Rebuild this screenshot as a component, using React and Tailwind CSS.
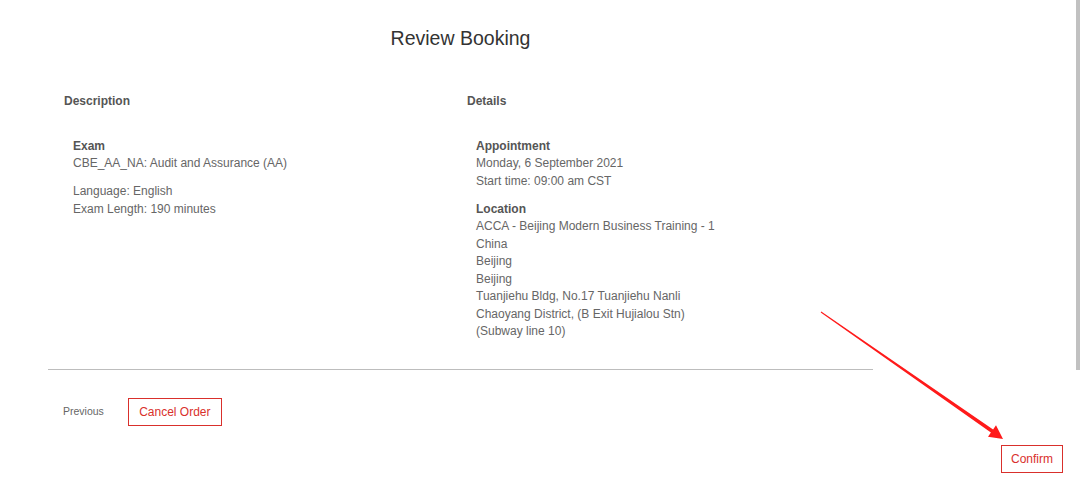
import React from "react";

const body = "text-[12px] leading-[17.5px] text-[#666]";
const label = "text-[12px] leading-[17.5px] font-bold text-[#555]";

function Arrow() {
  return (
    <svg
      className="absolute left-0 top-0 pointer-events-none"
      width="1080"
      height="480"
      viewBox="0 0 1080 480"
    >
      <polygon
        points="821.3,311.6 993.1,429.4 996,425.2 1003,439 988,436.8 990.9,432.6 820.7,312.4"
        fill="#ff1a1a"
      />
    </svg>
  );
}

export default function App() {
  return (
    <div
      className="relative w-[1080px] h-[480px] overflow-hidden bg-white"
      style={{ fontFamily: '"Liberation Sans", Arial, sans-serif' }}
    >
      <div className="ml-[48px] w-[825px] pt-[24px]">
        <h1 className="text-center text-[19.5px] leading-[28px] text-[#333]">Review Booking</h1>

        <div className="grid grid-cols-[403px_1fr] mt-[41px]">
          <div className="pl-[16px]">
            <div className={label}>Description</div>
            <div className="pl-[9px] mt-[27px]">
              <div className={label}>Exam</div>
              <div className={body}>CBE_AA_NA: Audit and Assurance (AA)</div>
              <div className={`${body} mt-[10.5px]`}>Language: English</div>
              <div className={body}>Exam Length: 190 minutes</div>
            </div>
          </div>
          <div className="pl-[16px]">
            <div className={label}>Details</div>
            <div className="pl-[9px] mt-[27px]">
              <div className={label}>Appointment</div>
              <div className={body}>Monday, 6 September 2021</div>
              <div className={body}>Start time: 09:00 am CST</div>
              <div className={`${label} mt-[10.5px]`}>Location</div>
              <div className={body}>ACCA - Beijing Modern Business Training - 1</div>
              <div className={body}>China</div>
              <div className={body}>Beijing</div>
              <div className={body}>Beijing</div>
              <div className={body}>Tuanjiehu Bldg, No.17 Tuanjiehu Nanli</div>
              <div className={body}>Chaoyang District, (B Exit Hujialou Stn)</div>
              <div className={body}>(Subway line 10)</div>
            </div>
          </div>
        </div>

        <div className="mt-[28px] h-px bg-[#bdbdbd]" />

        <div className="flex items-center mt-[28px] pl-[15px]">
          <span className="text-[10.5px] text-[#666]">Previous</span>
          <button className="ml-[24px] w-[94px] h-[28px] border border-[#d9302c] text-[12px] text-[#d9302c] bg-white">
            Cancel Order
          </button>
        </div>
      </div>

      <div className="flex justify-end pr-[17px] mt-[19px]">
        <button className="w-[62px] h-[28px] border border-[#d9302c] text-[12px] text-[#d9302c] bg-white">
          Confirm
        </button>
      </div>

      <div className="absolute right-0 top-0 w-[4px] h-[370px] bg-[#c1c1c1]" />
      <Arrow />
    </div>
  );
}
